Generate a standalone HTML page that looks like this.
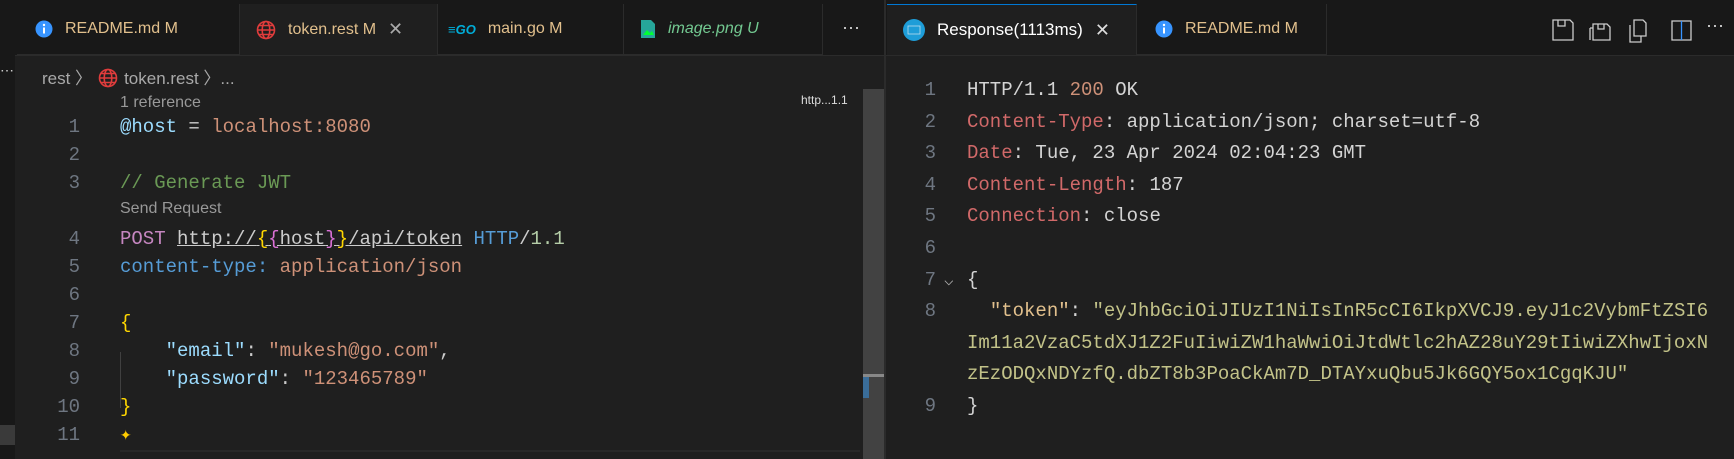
<!DOCTYPE html>
<html><head><meta charset="utf-8"><style>
body{margin:0;width:1734px;height:459px;background:#1f1f1f;overflow:hidden;position:relative;font-family:"Liberation Sans",sans-serif}
.a{position:absolute;white-space:pre}
.tab{position:absolute;top:4px;height:51px;background:#181818;border-right:1px solid #2b2b2b;border-bottom:1px solid #2b2b2b;box-sizing:border-box;font-size:16px;color:#e2c08d;display:flex;align-items:center;padding-left:16px;gap:12px;white-space:nowrap}
.tab svg,.tab span{flex-shrink:0}
.mono{font-family:"Liberation Mono",monospace}
.L{font-size:19px;line-height:28px}
.R{font-size:19px;line-height:31.6px}
.ln{color:#6e7681;text-align:right}
</style></head><body>
<div class="a" style="left:0;top:0;width:1734px;height:4px;background:#181818"></div>
<div class="a" style="left:0;top:0;width:15px;height:459px;background:#181818"></div>
<div class="a" style="left:0;top:425px;width:15px;height:20px;background:#3a3a3a"></div>
<div class="a" style="left:0;top:62px;color:#ccc;font-size:14px">⋯</div>
<div class="a" style="left:15px;top:4px;width:871px;height:51px;background:#181818;border-bottom:1px solid #2b2b2b"></div>
<div class="a" style="left:886px;top:4px;width:848px;height:51px;background:#181818;border-bottom:1px solid #2b2b2b"></div>
<div class="a" style="left:884px;top:0;width:2px;height:459px;background:#2b2b2b"></div>

<div class="tab" style="left:17px;width:223px;padding-left:18px"><svg width="18" height="18"><circle cx="9" cy="9" r="8.5" fill="#3794ff"/><rect x="8" y="7.5" width="2" height="6" fill="#fff"/><circle cx="9" cy="5" r="1.2" fill="#fff"/></svg>README.md M</div>
<div class="tab" style="left:240px;width:198px;background:#1f1f1f;border-bottom:none"><svg width="20" height="20" fill="none" stroke="#e03c3c" stroke-width="1.6"><circle cx="10" cy="10" r="8.5"/><ellipse cx="10" cy="10" rx="3.8" ry="8.5"/><path d="M1.5 10h17M3 5.5h14M3 14.5h14"/></svg>token.rest M <span style="color:#aaa;font-size:18px">✕</span></div>
<div class="tab" style="left:438px;width:186px;padding-left:10px"><span style="color:#00add8;font-weight:bold;font-style:italic;font-size:13px">≡GO</span>main.go M</div>
<div class="tab" style="left:624px;width:199px"><svg width="16" height="20"><path d="M1 1h10l4 4v14H1z" fill="#26a69a"/><path d="M3 16l4-5 3 3 2-2 2 4z" fill="#0f3"/></svg><span style="color:#73c991;font-style:italic">image.png U</span></div>
<div class="a" style="left:842px;top:18px;color:#ccc;font-size:18px">⋯</div>

<div class="tab" style="left:887px;width:250px;background:#1f1f1f;border-top:1px solid #0078d4;border-bottom:none;color:#fff;font-size:17px"><svg width="22" height="22"><circle cx="11" cy="11" r="11" fill="#1e9dd8"/><rect x="5" y="7" width="12" height="8" fill="none" stroke="#bde" stroke-width=".8"/></svg>Response(1113ms) <span style="color:#ddd;font-size:18px">✕</span></div>
<div class="tab" style="left:1137px;width:190px;padding-left:18px"><svg width="18" height="18"><circle cx="9" cy="9" r="8.5" fill="#3794ff"/><rect x="8" y="7.5" width="2" height="6" fill="#fff"/><circle cx="9" cy="5" r="1.2" fill="#fff"/></svg>README.md M</div>
<svg class="a" style="left:1550px;top:18px" width="184" height="26" fill="none" stroke="#ccc" stroke-width="1.3">
<path d="M3 2h17l3 3v17H3z M8 2v6h7V2"/>
<path d="M43 6h14l3 3v13H43z M40 10v12M40 10h3 M48 6v5h6V6"/>
<path d="M84 2h9l3 3v13H84z M80 7v17h11v-6"/>
<path d="M122 3h19v19h-19z"/><path d="M131.5 3v19" stroke="#3794ff"/>
</svg>
<div class="a" style="left:1706px;top:16px;color:#ccc;font-size:18px">⋯</div>

<div class="a" style="left:42px;top:64px;font-size:17px;color:#a9a9a9">rest 〉<svg width="20" height="20" style="vertical-align:-4px;margin:0 6px" fill="none" stroke="#e03c3c" stroke-width="1.6"><circle cx="10" cy="10" r="8.5"/><ellipse cx="10" cy="10" rx="3.8" ry="8.5"/><path d="M1.5 10h17M3 5.5h14M3 14.5h14"/></svg>token.rest 〉...</div>
<div class="a" style="left:801px;top:93px;font-size:12px;color:#ddd">http...1.1</div>
<div class="a" style="left:863px;top:89px;width:21px;height:370px;background:#424242"></div>
<div class="a" style="left:863px;top:374px;width:21px;height:3px;background:#888"></div>
<div class="a" style="left:863px;top:377px;width:6px;height:21px;background:#3a6d99"></div>

<div class="a mono L ln" style="left:40px;top:113px;width:40px">1
2
3

4
5
6
7
8
9
10
11</div>
<div class="a mono L" style="left:120px;top:113px;color:#ccc"><span style="color:#9cdcfe">@host</span> = <span style="color:#ce9178">localhost:8080</span>

<span style="color:#6a9955">// Generate JWT</span>

<span style="color:#c586c0">POST</span> <span style="text-decoration:underline">http://<span style="color:#ffd700">{</span><span style="color:#da70d6">{</span>host<span style="color:#da70d6">}</span><span style="color:#ffd700">}</span>/api/token</span> <span style="color:#569cd6">HTTP</span>/<span style="color:#b5cea8">1.1</span>
<span style="color:#569cd6">content-type:</span> <span style="color:#ce9178">application/json</span>

<span style="color:#ffd700">{</span>
    <span style="color:#9cdcfe">"email"</span>: <span style="color:#ce9178">"mukesh@go.com"</span>,
    <span style="color:#9cdcfe">"password"</span>: <span style="color:#ce9178">"123465789"</span>
<span style="color:#ffd700">}</span>
<span style="color:#ffcc00">✦</span></div>
<div class="a" style="left:120px;top:94px;font-size:16px;color:#999">1 reference</div>
<div class="a" style="left:120px;top:200px;font-size:16px;color:#999">Send Request</div>
<div class="a" style="left:120px;top:352px;width:1px;height:56px;background:#404040"></div>
<div class="a" style="left:120px;top:450px;width:740px;height:2px;background:#282828"></div>

<div class="a mono R ln" style="left:910px;top:75px;width:26px">1
2
3
4
5
6
7
8


9</div>
<div class="a mono" style="left:944px;top:266px;color:#aaa;font-size:16px;line-height:31.6px">⌵</div>
<div class="a mono R" style="left:967px;top:75px;color:#d4d4d4">HTTP/1.1 <span style="color:#ce9178">200</span> OK
<span style="color:#d16969">Content-Type</span>: application/json; charset=utf-8
<span style="color:#d16969">Date</span>: Tue, 23 Apr 2024 02:04:23 GMT
<span style="color:#d16969">Content-Length</span>: 187
<span style="color:#d16969">Connection</span>: close

{
  <span style="color:#e2c08d">"token"</span>: <span style="color:#c3c389">"eyJhbGciOiJIUzI1NiIsInR5cCI6IkpXVCJ9.eyJ1c2VybmFtZSI6</span>
<span style="color:#c3c389">Im11a2VzaC5tdXJ1Z2FuIiwiZW1haWwiOiJtdWtlc2hAZ28uY29tIiwiZXhwIjoxN</span>
<span style="color:#c3c389">zEzODQxNDYzfQ.dbZT8b3PoaCkAm7D_DTAYxuQbu5Jk6GQY5ox1CgqKJU"</span>
}</div>
</body></html>
